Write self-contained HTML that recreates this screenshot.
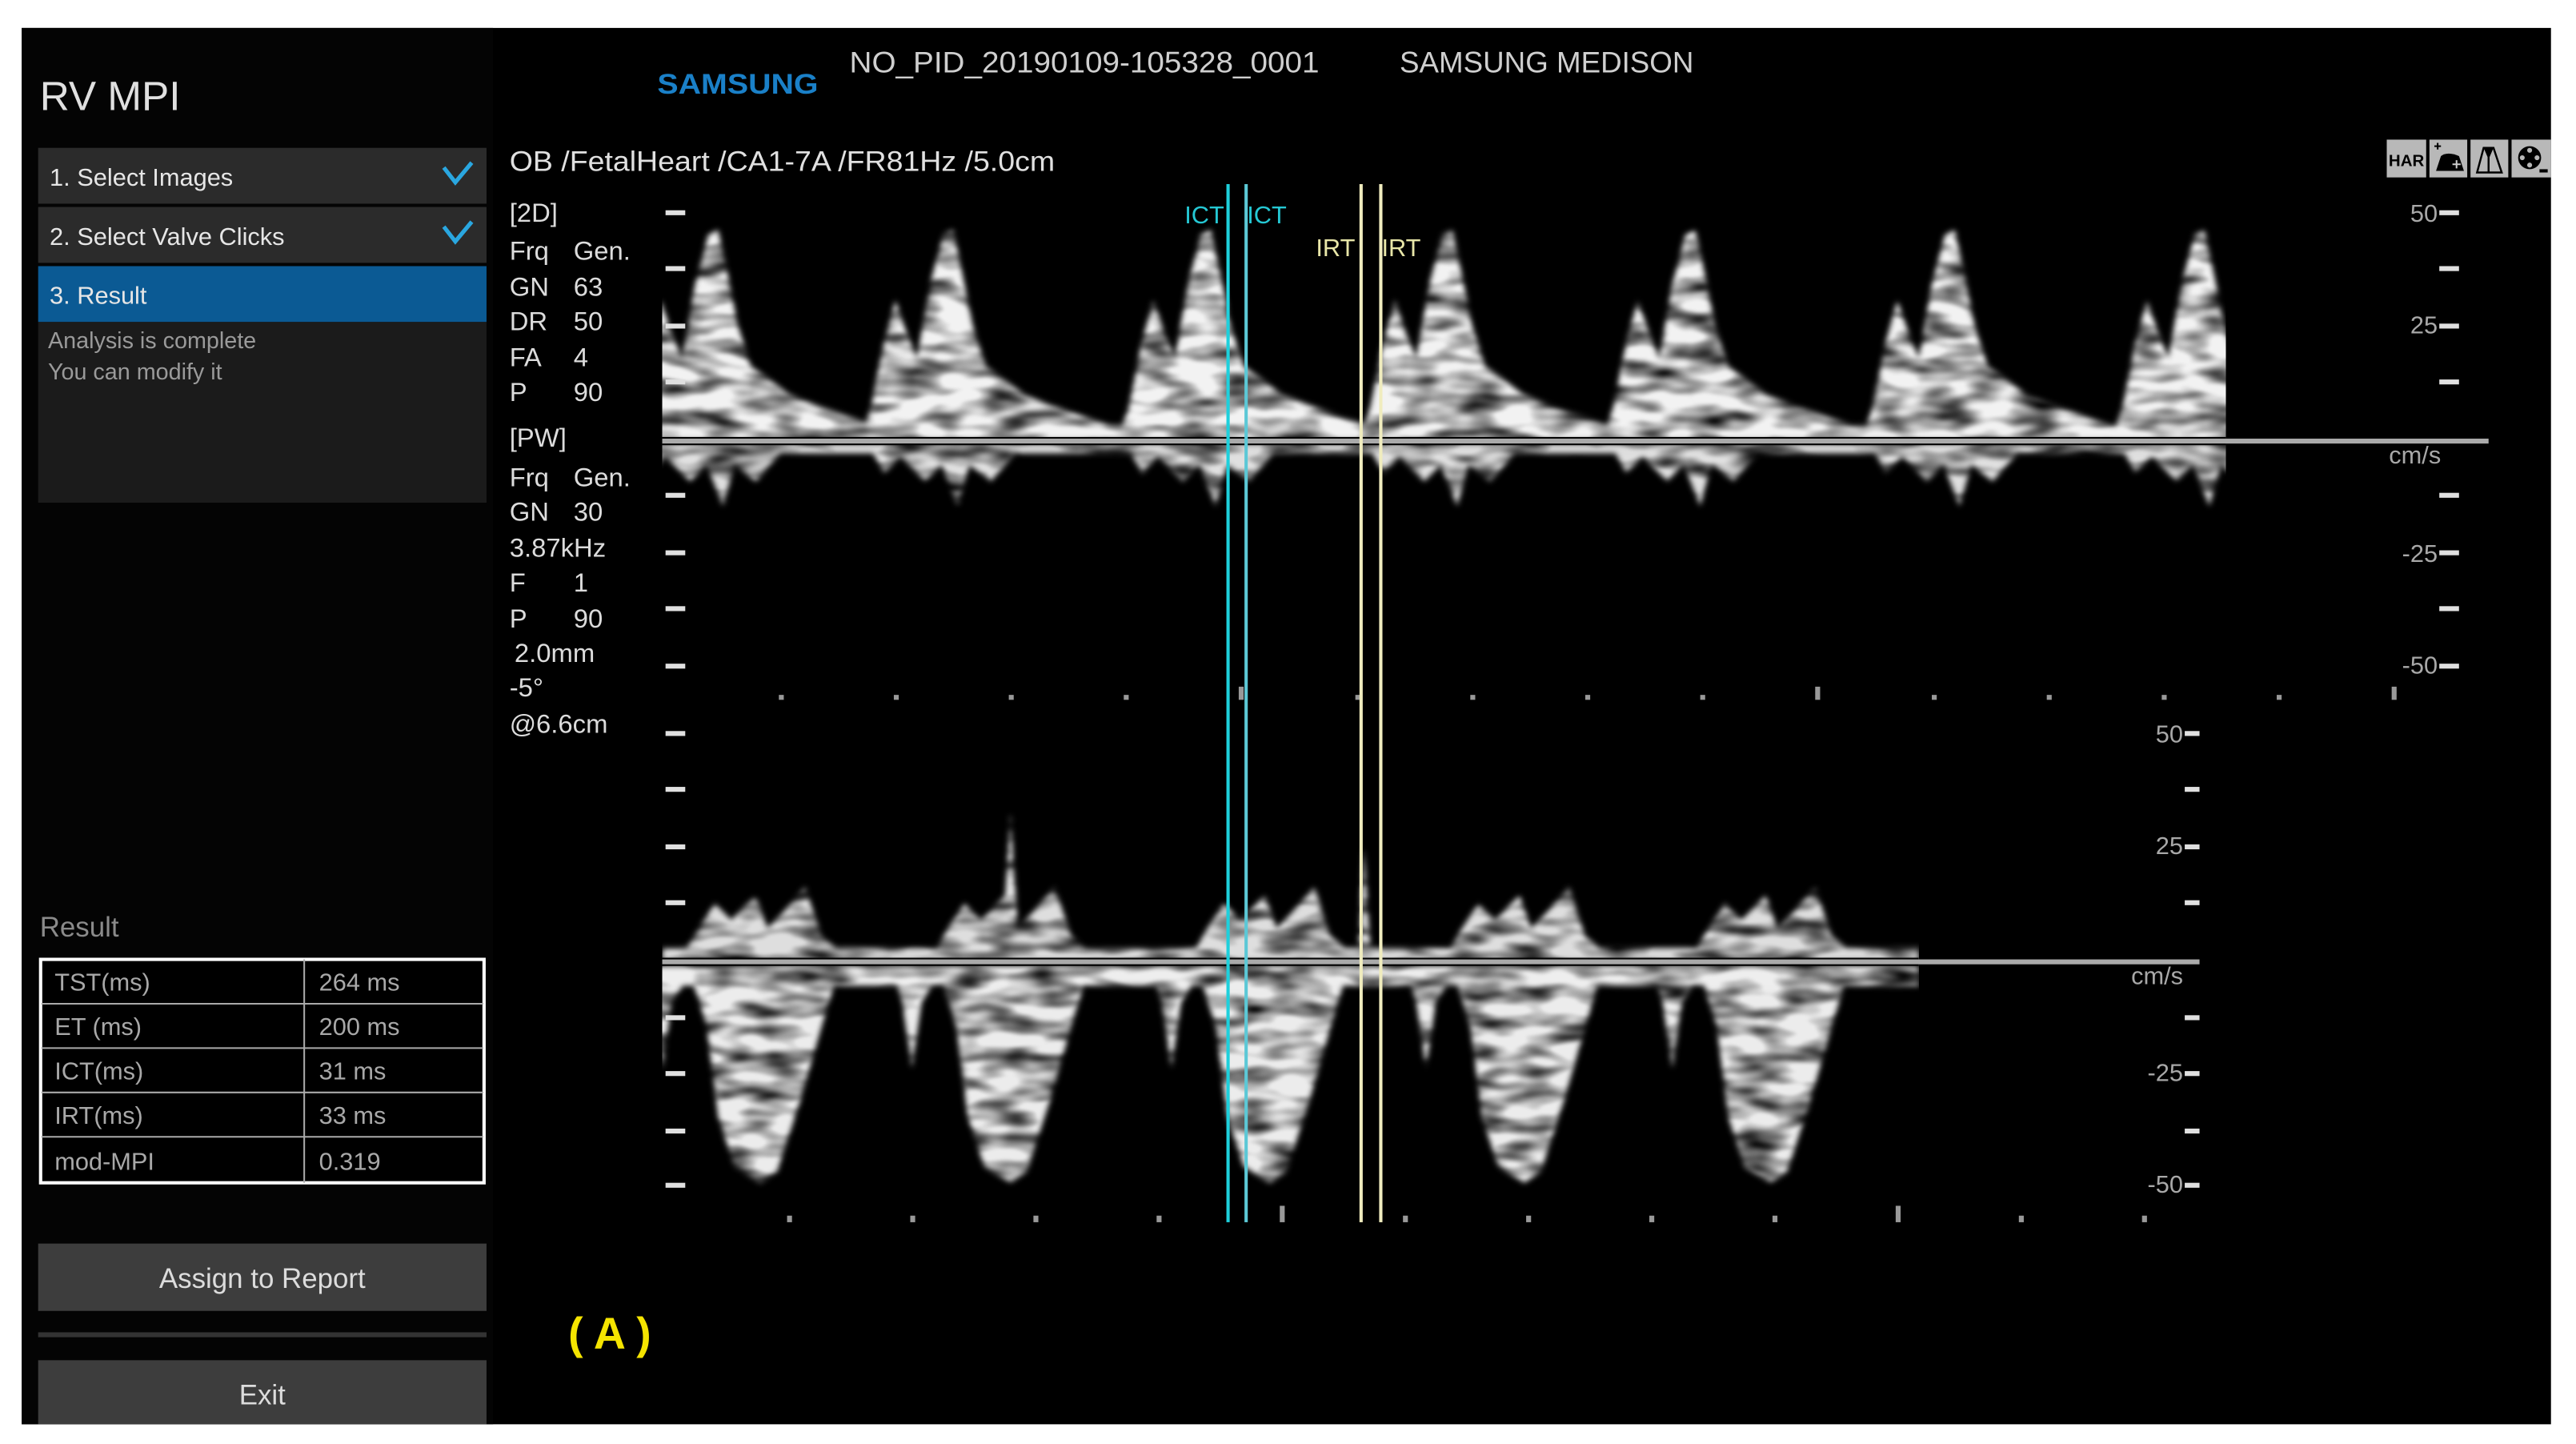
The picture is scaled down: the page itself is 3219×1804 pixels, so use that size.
<!DOCTYPE html>
<html><head><meta charset="utf-8"><style>
html,body{margin:0;padding:0;background:#fff;width:3219px;height:1804px;overflow:hidden}
svg{display:block}
text{font-family:"Liberation Sans Narrow","Liberation Sans",sans-serif}
</style></head><body>
<svg width="3219" height="1804" viewBox="0 0 1568 879" xmlns="http://www.w3.org/2000/svg">
<defs>
<filter id="bl" x="-5%" y="-30%" width="110%" height="160%">
<feGaussianBlur in="SourceGraphic" stdDeviation="1.5" result="b"/>
<feTurbulence type="fractalNoise" baseFrequency="0.035 0.1" numOctaves="2" seed="3" result="n"/>
<feColorMatrix in="n" type="matrix" values="0 0 0 0 1  0 0 0 0 1  0 0 0 0 1  0 0 0 2.0 -0.25" result="na"/>
<feComposite in="b" in2="na" operator="in" result="c"/>
<feGaussianBlur in="c" stdDeviation="0.8"/>
</filter>
<clipPath id="lc"><rect x="403" y="440" width="765" height="300"/></clipPath>
<clipPath id="uc"><rect x="403" y="100" width="952" height="240"/></clipPath>
<g id="ub">
<path d="M-55,0 L-48,-20 L-40,-60 L-33,-85 L-26,-65 L-20,-50 L-12,-95 L-4,-125 L2,-128 L8,-100 L14,-70 L22,-45 L32,-38 L45,-28 L60,-22 L80,-15 L100,-8 L110,0 Z" fill="#f2f2f2"/>
<path d="M-50,2 L-40,20 L-30,10 L-15,25 L-5,15 L5,40 L12,15 L25,25 L40,8 L50,2 Z" fill="#e0e0e0"/>
</g>
<g id="lb">
<path d="M-85,3 L-78,25 L-72,65 L-66,25 L-55,8 L-45,40 L-38,95 L-28,125 L-12,135 L-2,128 L12,85 L25,40 L34,10 L42,3 Z" fill="#ececec"/>
<path d="M-60,-3 L-50,-20 L-40,-35 L-30,-25 L-15,-40 L-8,-20 L0,-28 L15,-45 L25,-15 L40,-3 Z" fill="#dedede"/>
</g>
</defs>
<rect x="13" y="17" width="1540" height="850" fill="#000"/>
<rect x="13" y="17" width="287" height="850" fill="#040404"/>

<text x="24" y="67" font-size="25" fill="#e0e0e0">RV MPI</text>
<rect x="23" y="90" width="273" height="34" fill="#2b2b2b"/>
<rect x="23" y="126" width="273" height="34" fill="#2b2b2b"/>
<rect x="23" y="162" width="273" height="34" fill="#0b5a94"/>
<rect x="23" y="196" width="273" height="110" fill="#1b1b1b"/>
<text x="30" y="113" font-size="15" fill="#e6e6e6">1. Select Images</text>
<text x="30" y="149" font-size="15" fill="#e6e6e6">2. Select Valve Clicks</text>
<text x="30" y="185" font-size="15" fill="#e6e6e6">3. Result</text>
<path d="M270,102 L277,111 L287,99" stroke="#2aa7e0" stroke-width="2.5" fill="none"/>
<path d="M270,138 L277,147 L287,135" stroke="#2aa7e0" stroke-width="2.5" fill="none"/>
<text x="29" y="212" font-size="14" fill="#9a9a9a">Analysis is complete</text>
<text x="29" y="231" font-size="14" fill="#9a9a9a">You can modify it</text>

<text x="24" y="570" font-size="17" fill="#8a8a8a">Result</text>
<rect x="24.5" y="584" width="270" height="136" fill="#000" stroke="#fff" stroke-width="2"/>
<g stroke="#aaa" stroke-width="1">
<line x1="185" y1="584" x2="185" y2="720"/>
<line x1="25" y1="611" x2="294" y2="611"/>
<line x1="25" y1="638" x2="294" y2="638"/>
<line x1="25" y1="665" x2="294" y2="665"/>
<line x1="25" y1="692" x2="294" y2="692"/>
</g>
<g font-size="15" fill="#a8a8a8">
<text x="33" y="603">TST(ms)</text><text x="194" y="603">264 ms</text>
<text x="33" y="630">ET (ms)</text><text x="194" y="630">200 ms</text>
<text x="33" y="657">ICT(ms)</text><text x="194" y="657">31 ms</text>
<text x="33" y="684">IRT(ms)</text><text x="194" y="684">33 ms</text>
<text x="33" y="712">mod-MPI</text><text x="194" y="712">0.319</text>
</g>
<rect x="23" y="757" width="273" height="41" fill="#3d3d3d"/>
<text x="159.5" y="784" font-size="17" fill="#dcdcdc" text-anchor="middle">Assign to Report</text>
<rect x="23" y="811" width="273" height="3" fill="#333"/>
<rect x="23" y="828" width="273" height="39" fill="#3d3d3d"/>
<text x="159.5" y="855" font-size="17" fill="#dcdcdc" text-anchor="middle">Exit</text>

<text x="400" y="57" font-size="17" font-weight="bold" fill="#1a80c8" textLength="98" lengthAdjust="spacingAndGlyphs" font-family="Liberation Sans">SAMSUNG</text>
<text x="517" y="44" font-size="18" fill="#cfcfcf" textLength="286" lengthAdjust="spacingAndGlyphs">NO_PID_20190109-105328_0001</text>
<text x="852" y="44" font-size="18" fill="#cfcfcf" textLength="179" lengthAdjust="spacingAndGlyphs">SAMSUNG MEDISON</text>
<text x="310" y="104" font-size="17" fill="#e0e0e0" textLength="332" lengthAdjust="spacingAndGlyphs">OB /FetalHeart /CA1-7A /FR81Hz /5.0cm</text>

<g font-size="16" fill="#dcdcdc" font-family="Liberation Sans">
<text x="310" y="135">[2D]</text>
<text x="310" y="158">Frq</text><text x="349" y="158">Gen.</text>
<text x="310" y="180">GN</text><text x="349" y="180">63</text>
<text x="310" y="201">DR</text><text x="349" y="201">50</text>
<text x="310" y="223">FA</text><text x="349" y="223">4</text>
<text x="310" y="244">P</text><text x="349" y="244">90</text>
<text x="310" y="272">[PW]</text>
<text x="310" y="296">Frq</text><text x="349" y="296">Gen.</text>
<text x="310" y="317">GN</text><text x="349" y="317">30</text>
<text x="310" y="339">3.87kHz</text>
<text x="310" y="360">F</text><text x="349" y="360">1</text>
<text x="310" y="382">P</text><text x="349" y="382">90</text>
<text x="313" y="403">2.0mm</text>
<text x="310" y="424">-5°</text>
<text x="310" y="446">@6.6cm</text>
</g>

<g>
<rect x="1453" y="85" width="24" height="23" fill="#b8b8b8"/>
<text x="1465" y="101" font-size="10" font-weight="bold" fill="#000" text-anchor="middle" font-family="Liberation Sans">HAR</text>
<rect x="1479" y="85" width="23" height="23" fill="#b8b8b8"/>
<path d="M1483,104 L1486,95 Q1490,92 1497,95 L1500,104 Z" fill="#000"/>
<path d="M1482,89 h4 M1484,87 v4" stroke="#000" stroke-width="1"/>
<path d="M1493,100 h5 M1495.5,97.5 v5" stroke="#ccc" stroke-width="1"/>
<rect x="1504" y="85" width="23" height="23" fill="#b8b8b8"/>
<path d="M1508,105 L1512,90 L1518,90 L1523,105 Z M1515,90 V105" stroke="#000" stroke-width="1.2" fill="none"/>
<path d="M1512,90 L1518,90 L1515,97 Z" fill="#000"/>
<rect x="1529" y="85" width="24" height="23" fill="#b8b8b8"/>
<circle cx="1540" cy="96" r="7" fill="#000"/>
<g fill="#b8b8b8"><circle cx="1540" cy="91.5" r="1.5"/><circle cx="1540" cy="100.5" r="1.5"/><circle cx="1535.5" cy="96" r="1.5"/><circle cx="1544.5" cy="96" r="1.5"/></g>
<rect x="1546" y="103" width="5" height="2" fill="#000"/>
</g>

<g clip-path="url(#uc)">
<g filter="url(#bl)">
<rect x="403" y="259" width="952" height="8" fill="#ddd"/>
<use href="#ub" x="435" y="268"/>
<use href="#ub" x="578" y="268"/>
<use href="#ub" x="735" y="268"/>
<use href="#ub" x="882" y="268"/>
<use href="#ub" x="1030" y="268"/>
<use href="#ub" x="1188" y="268"/>
<use href="#ub" x="1340" y="268"/>
<rect x="403" y="270" width="952" height="6" fill="#ddd"/>
</g>
</g>
<rect x="403" y="267" width="1112" height="3" fill="#aaa"/>
<rect x="403" y="266" width="952" height="1" fill="#000"/>
<rect x="403" y="270" width="952" height="1" fill="#000"/>

<g fill="#e0e0e0">
<rect x="405" y="128" width="12" height="3"/><rect x="405" y="162" width="12" height="3"/>
<rect x="405" y="197" width="12" height="3"/><rect x="405" y="231" width="12" height="3"/>
<rect x="405" y="300" width="12" height="3"/><rect x="405" y="335" width="12" height="3"/>
<rect x="405" y="369" width="12" height="3"/><rect x="405" y="404" width="12" height="3"/>
<rect x="1485" y="128" width="12" height="3"/><rect x="1485" y="162" width="12" height="3"/>
<rect x="1485" y="197" width="12" height="3"/><rect x="1485" y="231" width="12" height="3"/>
<rect x="1485" y="300" width="12" height="3"/><rect x="1485" y="335" width="12" height="3"/>
<rect x="1485" y="369" width="12" height="3"/><rect x="1485" y="404" width="12" height="3"/>
</g>
<g font-size="15" fill="#a8a8a8" text-anchor="end" font-family="Liberation Sans">
<text x="1484" y="135">50</text><text x="1484" y="203">25</text>
<text x="1484" y="342">-25</text><text x="1484" y="410">-50</text>
<text x="1486" y="282">cm/s</text>
</g>
<g fill="#999">
<rect x="474" y="423" width="3" height="3"/><rect x="544" y="423" width="3" height="3"/><rect x="614" y="423" width="3" height="3"/>
<rect x="684" y="423" width="3" height="3"/><rect x="754" y="418" width="3" height="8"/><rect x="825" y="423" width="3" height="3"/>
<rect x="895" y="423" width="3" height="3"/><rect x="965" y="423" width="3" height="3"/><rect x="1035" y="423" width="3" height="3"/>
<rect x="1105" y="418" width="3" height="8"/><rect x="1176" y="423" width="3" height="3"/><rect x="1246" y="423" width="3" height="3"/>
<rect x="1316" y="423" width="3" height="3"/><rect x="1386" y="423" width="3" height="3"/><rect x="1456" y="418" width="3" height="8"/>
</g>

<g clip-path="url(#lc)">
<g filter="url(#bl)">
<rect x="403" y="577" width="765" height="8" fill="#ddd"/>
<use href="#lb" x="475" y="585"/>
<use href="#lb" x="627" y="585"/>
<use href="#lb" x="785" y="585"/>
<use href="#lb" x="940" y="585"/>
<use href="#lb" x="1090" y="585"/>
<rect x="403" y="588" width="765" height="12" fill="#eee"/>
<path d="M610,575 L615,495 L620,575 Z M827,575 L830,515 L834,575 Z" fill="#eee"/>
</g>
</g>
<rect x="403" y="584" width="936" height="3" fill="#aaa"/>
<rect x="403" y="583" width="765" height="1" fill="#000"/>
<rect x="403" y="587" width="765" height="1" fill="#000"/>
<g fill="#e0e0e0">
<rect x="405" y="445" width="12" height="3"/><rect x="405" y="479" width="12" height="3"/>
<rect x="405" y="514" width="12" height="3"/><rect x="405" y="548" width="12" height="3"/>
<rect x="405" y="618" width="12" height="3"/><rect x="405" y="652" width="12" height="3"/>
<rect x="405" y="687" width="12" height="3"/><rect x="405" y="720" width="12" height="3"/>
<rect x="1330" y="445" width="9" height="3"/><rect x="1330" y="479" width="9" height="3"/>
<rect x="1330" y="514" width="9" height="3"/><rect x="1330" y="548" width="9" height="3"/>
<rect x="1330" y="618" width="9" height="3"/><rect x="1330" y="652" width="9" height="3"/>
<rect x="1330" y="687" width="9" height="3"/><rect x="1330" y="720" width="9" height="3"/>
</g>
<g font-size="15" fill="#a8a8a8" text-anchor="end" font-family="Liberation Sans">
<text x="1329" y="452">50</text><text x="1329" y="520">25</text>
<text x="1329" y="658">-25</text><text x="1329" y="726">-50</text>
<text x="1329" y="599">cm/s</text>
</g>
<g fill="#999">
<rect x="479" y="740" width="3" height="4"/><rect x="554" y="740" width="3" height="4"/><rect x="629" y="740" width="3" height="4"/>
<rect x="704" y="740" width="3" height="4"/><rect x="779" y="734" width="3" height="10"/><rect x="854" y="740" width="3" height="4"/>
<rect x="929" y="740" width="3" height="4"/><rect x="1004" y="740" width="3" height="4"/><rect x="1079" y="740" width="3" height="4"/>
<rect x="1154" y="734" width="3" height="10"/><rect x="1229" y="740" width="3" height="4"/><rect x="1304" y="740" width="3" height="4"/>
</g>

<rect x="746.5" y="112" width="2" height="632" fill="#1ed0dc"/>
<rect x="757.5" y="112" width="2" height="632" fill="#5cc8d6"/>
<rect x="827.5" y="112" width="2" height="632" fill="#f0ecbe"/>
<rect x="839.5" y="112" width="2" height="632" fill="#f0ecbe"/>
<g font-family="Liberation Serif" font-size="15">
<text x="721" y="136" fill="#25c8d4">ICT</text>
<text x="759" y="136" fill="#25c8d4">ICT</text>
<text x="801" y="156" fill="#e8e6a8">IRT</text>
<text x="841" y="156" fill="#e8e6a8">IRT</text>
</g>

<text x="371" y="821" font-size="27" font-weight="bold" fill="#f5e400" text-anchor="middle" font-family="Liberation Sans">( A )</text>
</svg>
</body></html>
